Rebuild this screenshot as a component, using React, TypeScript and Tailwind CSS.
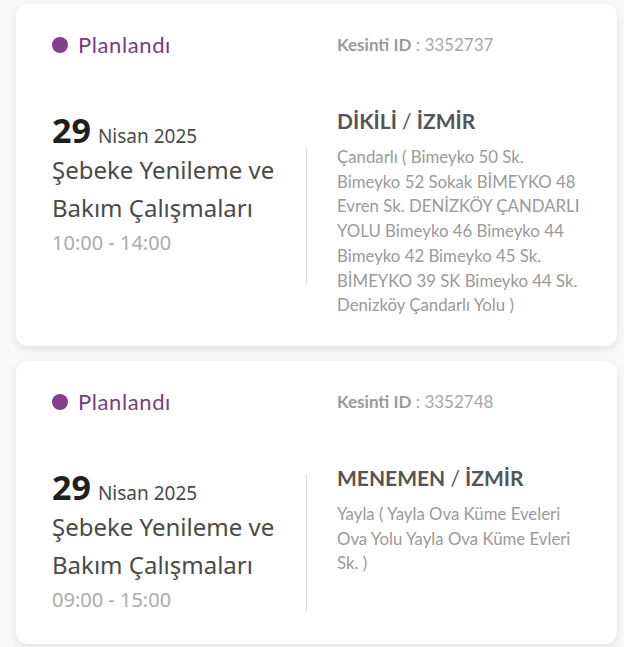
const outages = [
  {
    id: "3352737",
    day: "29",
    monthYear: "Nisan 2025",
    reason: ["Şebeke Yenileme ve", "Bakım Çalışmaları"],
    time: "10:00 - 14:00",
    district: "DİKİLİ",
    city: "İZMİR",
    address:
      "Çandarlı ( Bimeyko 50 Sk. Bimeyko 52 Sokak BİMEYKO 48 Evren Sk. DENİZKÖY ÇANDARLI YOLU Bimeyko 46 Bimeyko 44 Bimeyko 42 Bimeyko 45 Sk. BİMEYKO 39 SK Bimeyko 44 Sk. Denizköy Çandarlı Yolu )",
  },
  {
    id: "3352748",
    day: "29",
    monthYear: "Nisan 2025",
    reason: ["Şebeke Yenileme ve", "Bakım Çalışmaları"],
    time: "09:00 - 15:00",
    district: "MENEMEN",
    city: "İZMİR",
    address: "Yayla ( Yayla Ova Küme Eveleri Ova Yolu Yayla Ova Küme Evleri Sk. )",
  },
];

const humanist = { fontFamily: '"Noto Sans", "Open Sans", sans-serif' };
const geometric = { fontFamily: 'Lato, "Noto Sans", sans-serif' };

function OutageCard({ o }: { o: (typeof outages)[number] }) {
  return (
    <div className="rounded-xl bg-white pl-9 pr-9 pt-[29px] pb-7 shadow-[0_3px_8px_rgba(0,0,0,0.09)]">
      {/* status + id */}
      <div className="flex items-center">
        <div className="flex w-[285px] items-center gap-[10px]">
          <span className="h-4 w-4 rounded-full bg-[#853f8c]" />
          <span className="text-[22px] leading-6 tracking-[0.6px] text-[#7a3b80]" style={geometric}>
            Planlandı
          </span>
        </div>
        <div className="text-[17px] leading-6 text-[#9a9a9a]" style={geometric}>
          <span className="font-bold">Kesinti ID</span> <span className="text-[#a8a8a8]">: {o.id}</span>
        </div>
      </div>

      {/* body */}
      <div className="mt-[57px] flex items-start">
        <div className="w-[254px] shrink-0" style={humanist}>
          <div className="flex items-baseline gap-[7px] leading-8">
            <span className="text-[34px] font-bold text-[#1f1f1f]">{o.day}</span>
            <span className="text-[19px] text-[#4a4a4a]">{o.monthYear}</span>
          </div>
          <div className="-mt-[1px] text-[24px] leading-[38px] text-[#4a4a4a]">
            {o.reason.map((r) => (
              <div key={r}>{r}</div>
            ))}
          </div>
          <div className="text-[20px] leading-8 text-[#ababab]">{o.time}</div>
        </div>
        <div className="h-[138px] w-px shrink-0 self-center bg-[#dcdcdc]" />
        <div className="-mt-[3px] w-[244px] pl-[30px] box-content" style={geometric}>
          <div className="text-[21px] font-bold leading-5 text-[#555555]">
            {o.district} <span className="font-normal">/</span> {o.city}
          </div>
          <p className="mt-[14px] text-[16.8px] leading-[24.7px] text-[#9a9a9a]">{o.address}</p>
        </div>
      </div>
    </div>
  );
}

export default function App() {
  return (
    <div className="min-h-[647px] bg-[#f8f8f8] pb-2 pl-4 pr-[7px] pt-1">
      <div className="flex flex-col gap-[15px]">
        {outages.map((o) => (
          <OutageCard key={o.id} o={o} />
        ))}
      </div>
    </div>
  );
}
